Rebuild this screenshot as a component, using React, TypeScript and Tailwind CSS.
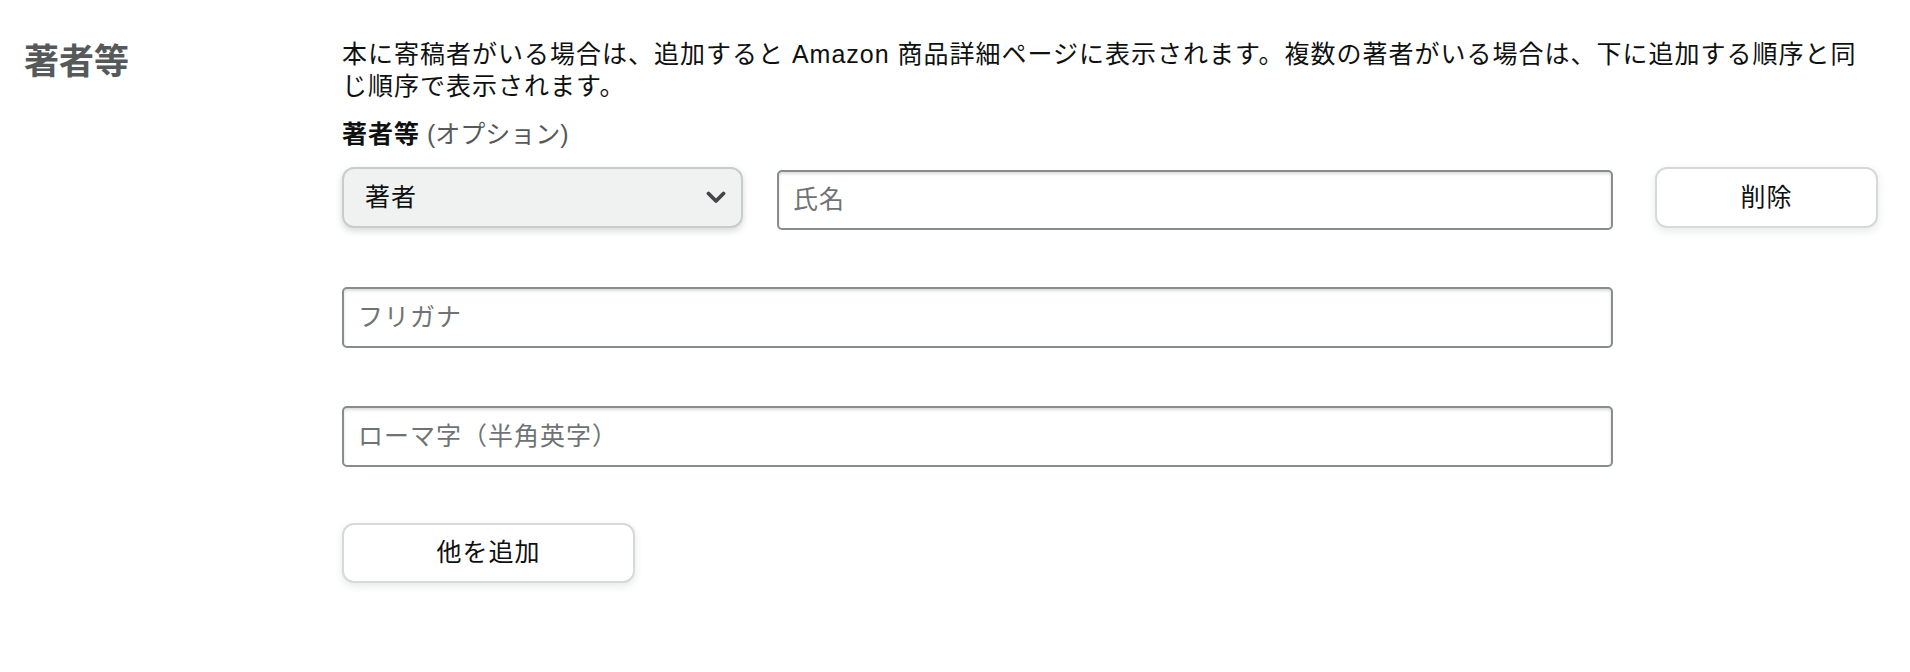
function Heading() {
  return (
    <div className="pt-[4px] pl-[24px] shrink-0 w-[342px]" data-name="Heading">
      <p className="font-bold leading-[40px] text-[#565959] text-[35px]">著者等</p>
    </div>
  );
}

function Description() {
  return (
    <p className="leading-[32px] text-[#0f1111] text-[25px] tracking-[1px]">
      本に寄稿者がいる場合は、追加すると Amazon 商品詳細ページに表示されます。複数の著者がいる場合は、下に追加する順序と同じ順序で表示されます。
    </p>
  );
}

function FieldLabel() {
  return (
    <p className="leading-[32px] mt-[16px] text-[25px]">
      <span className="font-bold text-[#0f1111] tracking-[1px]">著者等</span>
      <span className="text-[#565959] tracking-[0px]"> (オプション)</span>
    </p>
  );
}

function ChevronDown() {
  return (
    <svg width="20" height="13" viewBox="0 0 20 13" fill="none" aria-hidden="true">
      <path d="M2.5 2.5 L10 10 L17.5 2.5" stroke="#444747" strokeWidth="3.8" strokeLinecap="round" strokeLinejoin="round" />
    </svg>
  );
}

function RoleSelect() {
  return (
    <div
      className="bg-[#f0f2f2] border-[2px] border-[#c9cccc] border-solid flex h-[61px] items-center justify-between pl-[21px] pr-[15px] rounded-[12px] shadow-[0_3px_7px_rgba(15,17,17,0.16)] shrink-0 w-[401px]"
      data-name="Select"
    >
      <span className="text-[#0f1111] text-[25px] tracking-[1px]">著者</span>
      <ChevronDown />
    </div>
  );
}

function TextField({ placeholder, className }: { placeholder: string; className?: string }) {
  return (
    <div
      className={`bg-white border-[2px] border-[#888c8c] border-solid flex items-center px-[14px] rounded-[5px] shadow-[inset_0_2px_3px_rgba(15,17,17,0.15)] ${className ?? ""}`}
      data-name="Input"
    >
      <span className="text-[#6f7373] text-[25px] tracking-[1px] whitespace-nowrap">{placeholder}</span>
    </div>
  );
}

function SecondaryButton({ label, className }: { label: string; className?: string }) {
  return (
    <div
      className={`bg-white border-[2px] border-[#d5d9d9] border-solid flex items-center justify-center rounded-[12px] shadow-[0_3px_8px_rgba(213,217,217,0.6)] shrink-0 ${className ?? ""}`}
      data-name="Button"
    >
      <span className="text-[#0f1111] text-[25px] tracking-[1px]">{label}</span>
    </div>
  );
}

function NameRow() {
  return (
    <div className="flex items-start mt-[17px] w-full" data-name="Contributor Row">
      <RoleSelect />
      <TextField placeholder="氏名" className="flex-1 h-[60px] ml-[34px] mt-[3px]" />
      <SecondaryButton label="削除" className="h-[61px] ml-[42px] w-[223px]" />
    </div>
  );
}

function Content() {
  return (
    <div className="flex flex-col flex-1 min-w-0 pr-[32px]" data-name="Content">
      <Description />
      <FieldLabel />
      <NameRow />
      <div className="mt-[57px] pr-[265px] w-full">
        <TextField placeholder="フリガナ" className="h-[61px] w-full" />
      </div>
      <div className="mt-[58px] pr-[265px] w-full">
        <TextField placeholder="ローマ字（半角英字）" className="h-[61px] w-full" />
      </div>
      <div className="mt-[56px]">
        <SecondaryButton label="他を追加" className="h-[60px] w-[293px]" />
      </div>
    </div>
  );
}

export default function App() {
  return (
    <div className="bg-white flex font-['Liberation_Sans','Noto_Sans_CJK_JP',sans-serif] min-h-[672px] pt-[38px] w-full">
      <Heading />
      <Content />
    </div>
  );
}
